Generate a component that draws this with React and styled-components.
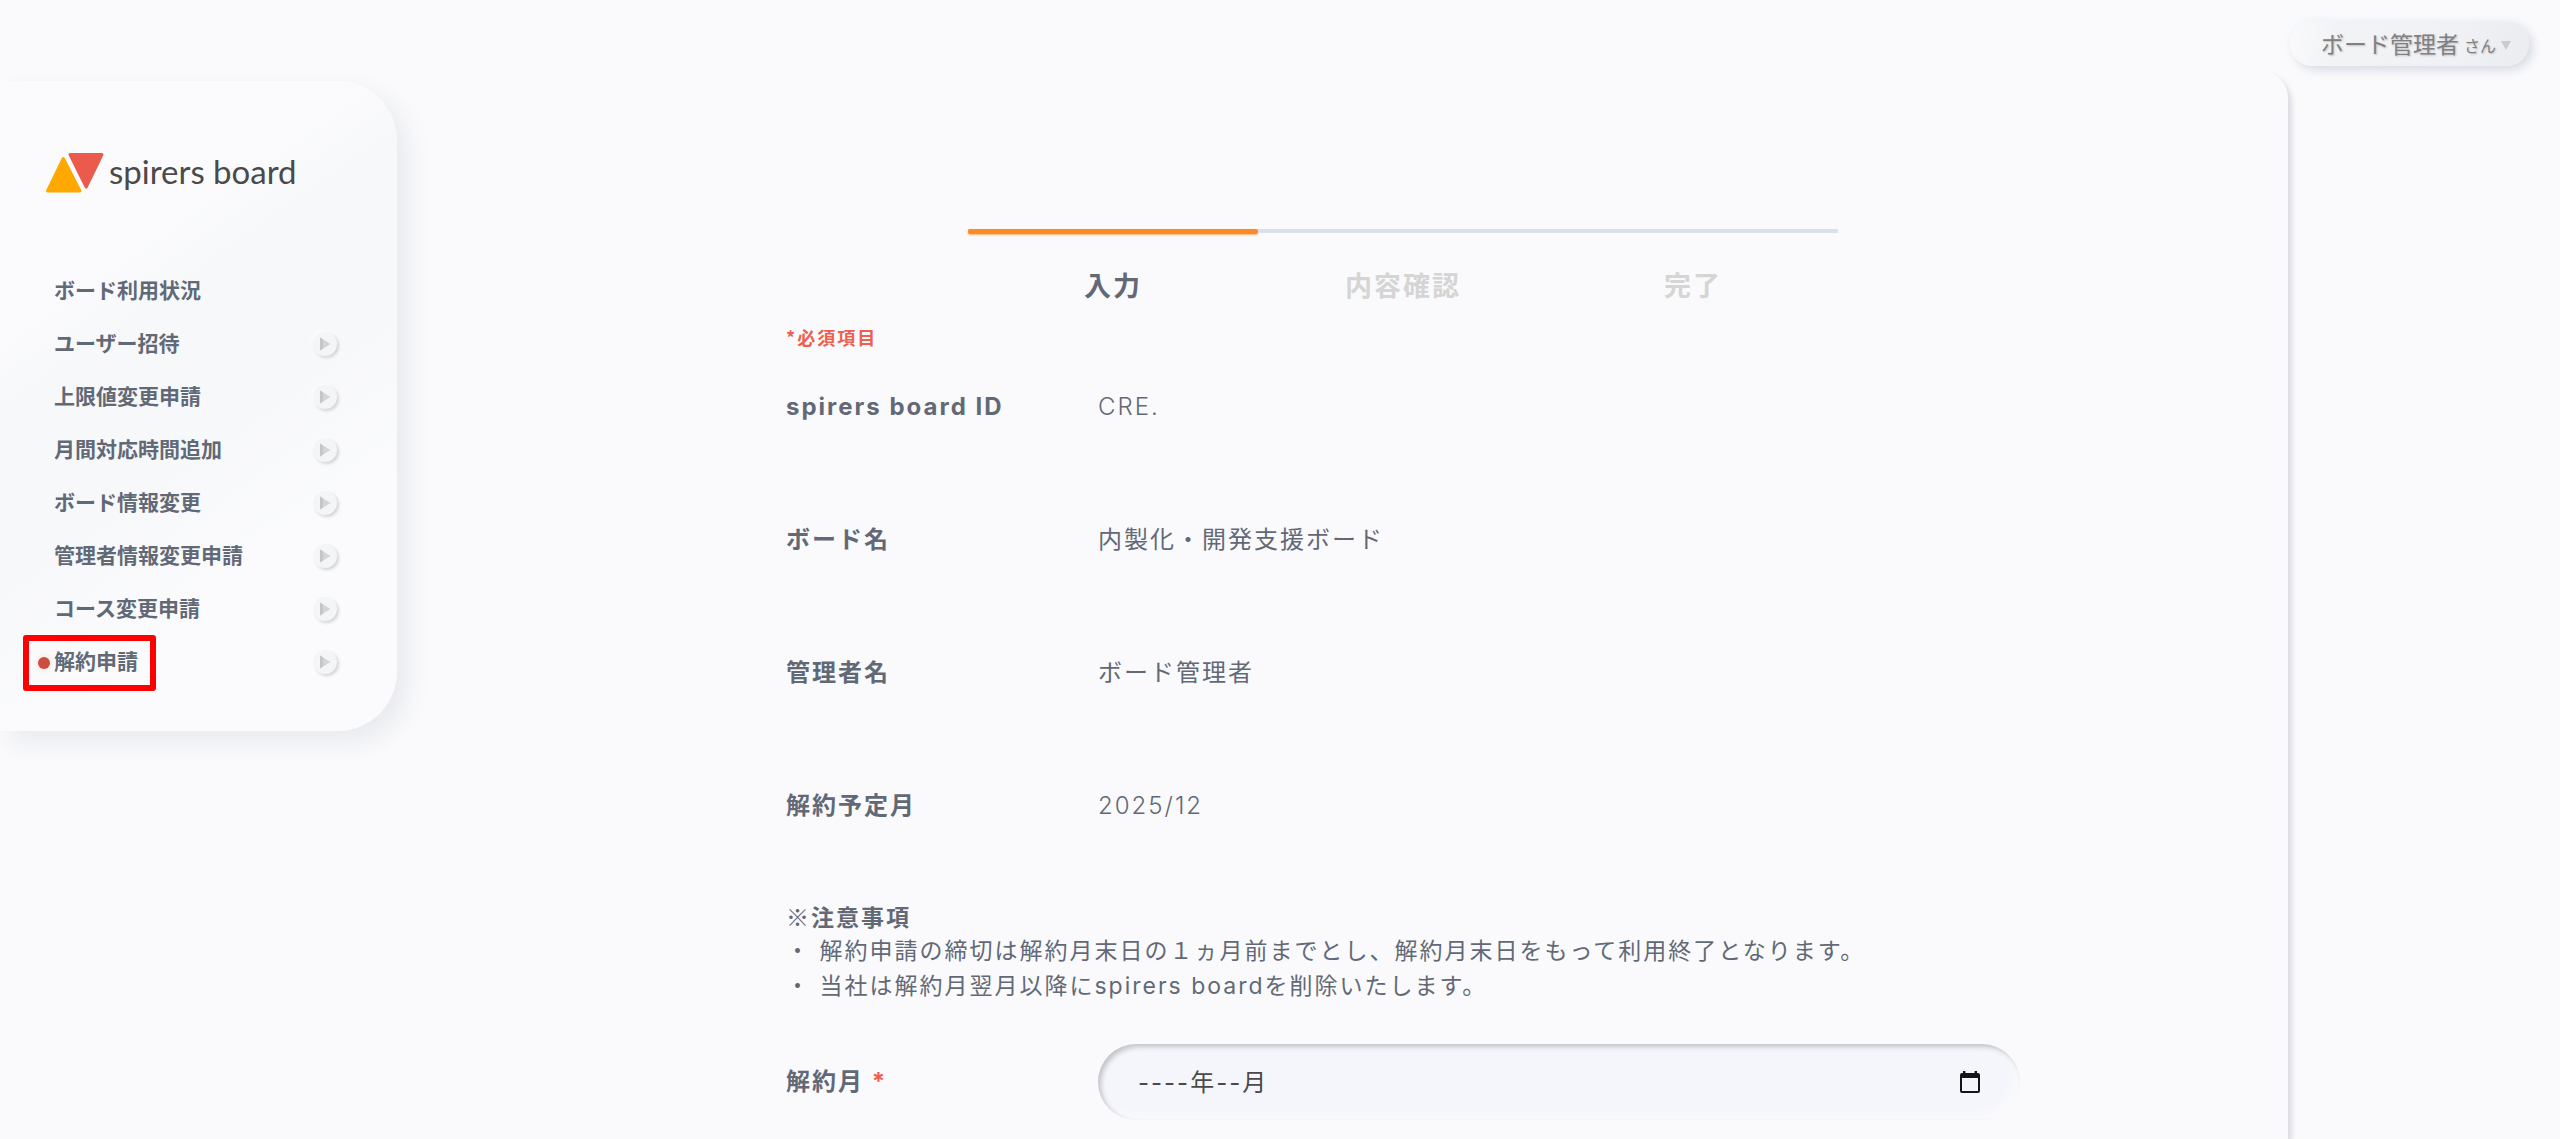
import React from "react";
import styled, { createGlobalStyle, css } from "styled-components";

const GlobalStyle = createGlobalStyle`
  *,
  *::before,
  *::after {
    box-sizing: border-box;
  }

  body {
    margin: 0;
    background-color: #fafafc;
    color: #626976;
    font-family: Inter, "Noto Sans CJK JP", sans-serif;
    font-size: 24px;
  }
`;

const Page = styled.div`
  display: flex;
  flex-direction: column;
  min-height: 100vh;
`;

const Header = styled.header`
  display: flex;
  justify-content: flex-end;
  padding: 21px 31px 5px;
`;

const UserMenu = styled.button`
  display: flex;
  align-items: center;
  height: 45px;
  padding: 0 18px 2px 31px;
  border: 0;
  border-radius: 23px;
  background: linear-gradient(100deg, #fafafc 0%, #f2f3f5 20%, #f0f1f4 70%, #eaecf0 100%);
  box-shadow: 4px 4px 10px #d8dbe4, -4px -4px 10px #f6f8fc;
  color: #808080;
  font-family: "Noto Sans CJK JP", sans-serif;
  font-size: 23px;
  text-shadow: 1px 1px 2px rgba(0, 0, 0, 0.2);
`;

const Honorific = styled.span`
  margin: 4px 5px 0 5px;
  font-size: 16px;
`;

const Caret = styled.span`
  margin-top: 6px;
  border: 5px solid transparent;
  border-top: 9px solid #cccccc;
  border-bottom: 0;
`;

const Layout = styled.div`
  display: grid;
  flex: 1;
  grid-template-columns: 397px minmax(0, 1fr);
  column-gap: 121px;
  padding-right: 272px;
`;

const Sidebar = styled.aside`
  align-self: start;
  margin-top: 10px;
  padding: 72px 60px 43px 46px;
  border-radius: 0 60px 60px 0;
  background: linear-gradient(145deg, #fbfbfd 0%, #fbfbfd 26%, #f7f8fa 36%, #f7f8fa 54%, #fbfbfd 74%);
  box-shadow: 11px 11px 24px #e8eaee;
`;

const Logo = styled.a`
  display: flex;
  align-items: flex-start;
  gap: 5px;
  height: 40px;
  color: #4a4a4a;
  font-family: Lato, sans-serif;
  font-size: 33px;
  line-height: 36px;
  text-decoration: none;
  white-space: nowrap;
`;

const Menu = styled.ul`
  margin: 71px 0 0;
  padding: 0 0 0 8px;
  list-style: none;
`;

const MenuItem = styled.li`
  position: relative;
  display: flex;
  align-items: center;
  justify-content: space-between;
  height: 53px;
`;

const MenuLink = styled.a`
  color: inherit;
  font-size: 21px;
  font-weight: 700;
  line-height: 32px;
  text-decoration: none;

  ${(props) =>
    props.$active &&
    css`
      &::before {
        content: "";
        position: absolute;
        top: 22px;
        left: -16px;
        width: 12px;
        height: 12px;
        border-radius: 50%;
        background-color: #cb4f40;
        box-shadow: 0 0 6px #fbd9c4;
      }

      &::after {
        content: "";
        position: absolute;
        top: 0;
        left: -31px;
        width: 133px;
        height: 56px;
        border: 6px solid #ff0000;
        border-radius: 3px;
      }
    `}
`;

const Expand = styled.button`
  display: flex;
  align-items: center;
  justify-content: center;
  width: 24px;
  height: 24px;
  padding: 0;
  border: 0;
  border-radius: 50%;
  background-color: #f4f5f7;
  box-shadow: 2px 2px 3px #d4d6d9, -2px -2px 3px #fbfbfc;
`;

const Panel = styled.main`
  padding: 158px 40px 19px;
  border-radius: 27px 27px 0 0;
  background-color: #fafafc;
  box-shadow: 4px 4px 5px #dcdee3;
`;

const Steps = styled.ol`
  display: flex;
  max-width: 870px;
  margin: 0 auto;
  padding: 0;
  list-style: none;
`;

const Step = styled.li`
  position: relative;
  flex: 1;
  padding-top: 34px;
  border-top: 4px solid #dae0e8;
  color: ${(props) => (props.$active ? "#626976" : "#d5d5d5")};
  font-size: 27px;
  font-weight: 700;
  letter-spacing: 2px;
  line-height: 40px;
  text-align: center;

  ${(props) =>
    props.$active &&
    css`
      &::before {
        content: "";
        position: absolute;
        top: -4px;
        left: 0;
        width: 100%;
        height: 5px;
        border-radius: 2px;
        background-color: #ff8a24;
        box-shadow: 0 1px 2px #ffb270;
      }
    `}
`;

const Form = styled.form`
  max-width: 1234px;
  margin: 16px auto 0;
  letter-spacing: 2px;
`;

const Required = styled.p`
  margin: 0 0 38px;
  color: #ee5f4e;
  font-family: "Noto Sans CJK JP", sans-serif;
  font-size: 18px;
  font-weight: 700;
  line-height: 28px;
`;

const Fields = styled.dl`
  display: grid;
  grid-template-columns: 312px minmax(0, 1fr);
  row-gap: 97px;
  margin: 0;
  line-height: 36px;
`;

const Term = styled.dt`
  font-weight: 700;
`;

const Value = styled.dd`
  margin: 0;
  font-weight: ${(props) => (props.$light ? 300 : 400)};
`;

const Notes = styled.section`
  margin-top: 75px;
  font-size: 23px;
  line-height: 35px;
`;

const NotesTitle = styled.h2`
  margin: 0;
  font-family: "Noto Sans CJK JP", sans-serif;
  font-size: 23px;
  font-weight: 700;
`;

const Mark = styled.span`
  font-weight: 400;
`;

const NotesList = styled.ul`
  margin: 0;
  padding: 0;
  list-style: none;
`;

const MonthRow = styled.div`
  display: grid;
  grid-template-columns: 312px minmax(0, 1fr);
  align-items: center;
  margin-top: 40px;
`;

const Label = styled.label`
  font-weight: 700;
  line-height: 36px;
`;

const Asterisk = styled.span`
  color: #ee5f4e;
`;

const MonthBox = styled.div`
  display: flex;
  align-items: center;
  height: 76px;
  padding: 0 40px;
  border-radius: 38px;
  background-color: #f5f6fb;
  box-shadow: inset 3px 3px 5px #c3c4c9, inset -6px -6px 6px #fafafc;
`;

const MonthInput = styled.input`
  flex: 1;
  min-width: 0;
  padding: 0 0 4px;
  border: 0;
  outline: 0;
  background: none;
  color: #4a4a4a;
  font: inherit;
  letter-spacing: 2px;
`;

const PickerButton = styled.button`
  display: flex;
  padding: 0;
  border: 0;
  background: none;
`;

const MENU = [
  { name: "ボード利用状況" },
  { name: "ユーザー招待", expandable: true },
  { name: "上限値変更申請", expandable: true },
  { name: "月間対応時間追加", expandable: true },
  { name: "ボード情報変更", expandable: true },
  { name: "管理者情報変更申請", expandable: true },
  { name: "コース変更申請", expandable: true },
  { name: "解約申請", expandable: true, active: true },
];

const STEPS = ["入力", "内容確認", "完了"];

const FIELDS = [
  { term: "spirers board ID", value: "CRE.", light: true },
  { term: "ボード名", value: "内製化・開発支援ボード" },
  { term: "管理者名", value: "ボード管理者" },
  { term: "解約予定月", value: "2025/12", light: true },
];

const LogoMark = () => (
  <svg width="58" height="40" viewBox="0 0 58 40" aria-hidden="true">
    <path
      d="M17.3 5.5 L34 38 H1.5 Z"
      fill="#ffa800"
      stroke="#ffa800"
      strokeWidth="3"
      strokeLinejoin="round"
    />
    <path
      d="M24 1.5 H56 L40.2 34 Z"
      fill="#ea5b4d"
      stroke="#ea5b4d"
      strokeWidth="3"
      strokeLinejoin="round"
    />
  </svg>
);

const PlayIcon = () => (
  <svg width="12" height="14" viewBox="0 0 12 14" aria-hidden="true">
    <path d="M1 0.5 L11.5 7 L1 13.5 Z" fill="#d4d4d5" />
    <path d="M1 0.5 L4 2.4 V11.6 L1 13.5 Z" fill="#c6c6c8" />
  </svg>
);

const CalendarIcon = () => (
  <svg width="20" height="22" viewBox="0 0 20 22" aria-hidden="true">
    <path
      d="M3 0 H5.4 V2 H14.6 V0 H17 V2 H18 A2 2 0 0 1 20 4 V20 A2 2 0 0 1 18 22 H2 A2 2 0 0 1 0 20 V4 A2 2 0 0 1 2 2 H3 Z M2 7 V20 H18 V7 Z"
      fill="#151515"
      fillRule="evenodd"
    />
  </svg>
);

const App = () => (
  <Page lang="ja">
    <GlobalStyle />
    <Header>
      <UserMenu type="button">
        ボード管理者
        <Honorific>さん</Honorific>
        <Caret />
      </UserMenu>
    </Header>
    <Layout>
      <Sidebar>
        <Logo href="#">
          <LogoMark />
          spirers board
        </Logo>
        <nav>
          <Menu>
            {MENU.map((item) => (
              <MenuItem key={item.name}>
                <MenuLink href="#" $active={item.active}>
                  {item.name}
                </MenuLink>
                {item.expandable && (
                  <Expand type="button" aria-label={item.name}>
                    <PlayIcon />
                  </Expand>
                )}
              </MenuItem>
            ))}
          </Menu>
        </nav>
      </Sidebar>
      <Panel>
        <Steps>
          {STEPS.map((step, index) => (
            <Step key={step} $active={index === 0}>
              {step}
            </Step>
          ))}
        </Steps>
        <Form>
          <Required>*必須項目</Required>
          <Fields>
            {FIELDS.map(({ term, value, light }) => (
              <React.Fragment key={term}>
                <Term>{term}</Term>
                <Value $light={light}>{value}</Value>
              </React.Fragment>
            ))}
          </Fields>
          <Notes>
            <NotesTitle>
              <Mark>※</Mark>注意事項
            </NotesTitle>
            <NotesList>
              <li>
                ・ 解約申請の締切は解約月末日の１ヵ月前までとし、解約月末日をもって利用終了となります。
              </li>
              <li>・ 当社は解約月翌月以降にspirers boardを削除いたします。</li>
            </NotesList>
          </Notes>
          <MonthRow>
            <Label htmlFor="month">
              解約月 <Asterisk>*</Asterisk>
            </Label>
            <MonthBox>
              <MonthInput id="month" type="text" defaultValue="----年--月" />
              <PickerButton type="button" aria-label="解約月">
                <CalendarIcon />
              </PickerButton>
            </MonthBox>
          </MonthRow>
        </Form>
      </Panel>
    </Layout>
  </Page>
);

export default App;
